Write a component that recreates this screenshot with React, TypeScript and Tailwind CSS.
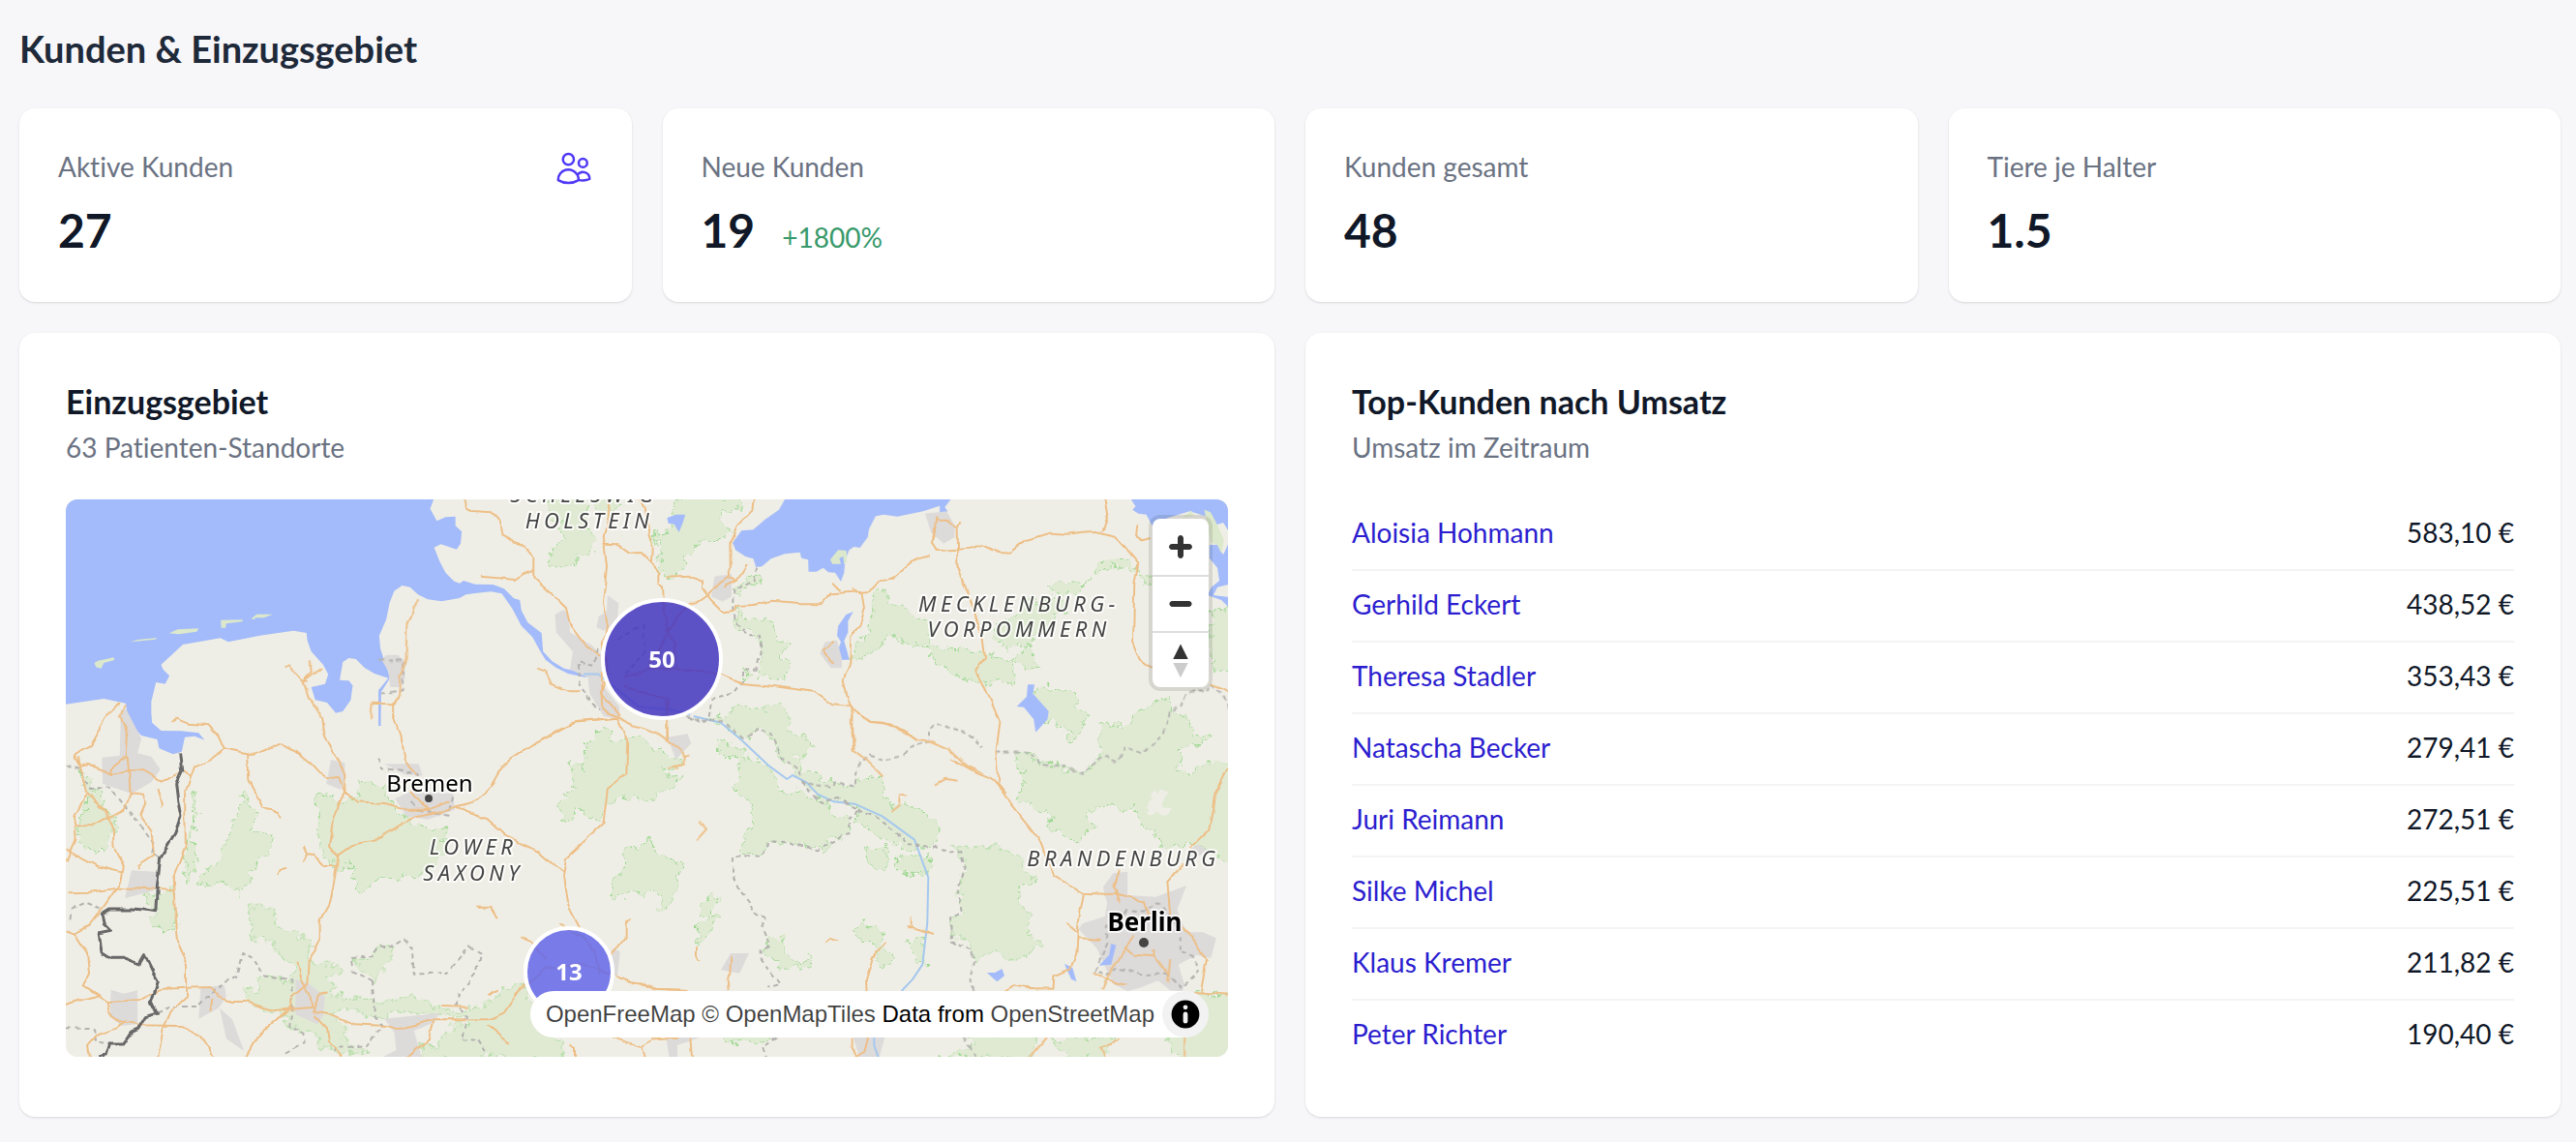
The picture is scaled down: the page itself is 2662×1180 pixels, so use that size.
import { HiOutlineUsers } from "react-icons/hi2";

type Sheet = "nw" | "top" | "ne" | "sw" | "mid" | "se";
type Shape = [Sheet, string];

const STATS = [
  { label: "Aktive Kunden", value: "27", icon: true },
  { label: "Neue Kunden", value: "19", change: "+1800%" },
  { label: "Kunden gesamt", value: "48" },
  { label: "Tiere je Halter", value: "1.5" },
];

const CUSTOMERS = [
  { name: "Aloisia Hohmann", revenue: "583,10 €" },
  { name: "Gerhild Eckert", revenue: "438,52 €" },
  { name: "Theresa Stadler", revenue: "353,43 €" },
  { name: "Natascha Becker", revenue: "279,41 €" },
  { name: "Juri Reimann", revenue: "272,51 €" },
  { name: "Silke Michel", revenue: "225,51 €" },
  { name: "Klaus Kremer", revenue: "211,82 €" },
  { name: "Peter Richter", revenue: "190,40 €" },
];

// The map is made of six overlapping sheets, each with its own grid.
const SHEETS: Record<Sheet, string> = {
  nw: "translate(-28 -136) scale(.4082 .3333)",
  top: "translate(492 -16) scale(.3333)",
  ne: "translate(592 -16) scale(.4082 .3333)",
  sw: "translate(-28 224) scale(.4082 .3333)",
  mid: "translate(432 224) scale(.3333)",
  se: "translate(592 244) scale(.4209 .3333)",
};

const WATER: Shape[] = [
  ["nw", "M60 300H1000V408L991 437 1008 475 1030 463 1055 461 1055 490 1071 508 1068 545 1058 563 1018 547 1001 557 1015 600 1030 635 1052 662 1066 668 1075 660 1105 671 1150 672 1178 685 1203 715 1218 720 1222 752 1238 790 1273 822 1277 880 1300 910 1330 932 1390 948 1385 960 1340 948 1310 930 1283 905 1268 875 1250 835 1222 800 1198 745 1172 700 1145 694 1110 698 1082 703 1065 714 1020 724 985 718 960 703 940 680 920 675 900 692 888 730 880 780 862 830 865 870 878 920 890 960 880 980 867 1005 866 1110 860 1110 860 1000 885 962 850 948 825 930 803 903 785 900 770 912 762 968 785 970 795 985 790 1030 770 1065 752 1070 730 1038 712 1033 700 1030 690 990 725 980 733 950 720 920 690 880 680 845 678 822 645 815 560 830 480 850 460 838 365 858 310 920 315 935 331 955 320 980 297 975 285 1035 285 1085 226 1085 220 1040 165 1026 60 1045Z"],
  ["sw", "M226 -5 235 30 260 60 300 72 305 100 340 118 362 110 370 65 395 62 420 74 405 52 360 46 310 45 287 20 285 -5Z"],
  ["ne", "M369 30V50L355 80 320 110 290 142 260 145 238 182 245 205 270 225 290 232 297 258 312 256 335 232 370 217 408 212 412 230 429 235 430 272 450 272 467 260 480 274 497 275 512 303 520 275 523 235 533 205 545 195 560 198 580 165 583 140 600 100 620 95 655 101 720 85 762 68 762 105 775 143 768 105 782 85 775 72 790 48V30Z"],
  ["ne", "M1242 40 1258 70 1250 80 1265 92 1285 95 1300 130 1340 105 1395 85 1430 98 1450 100 1455 130 1480 120 1500 160V30Z M1445 190 1465 188 1480 220 1500 165V310L1465 320 1455 345 1500 352V390L1475 360 1440 345 1450 320 1470 300 1465 260 1445 230Z"],
  ["ne", "M543 396 525 405 505 440 502 470 512 490 500 530 515 545 533 545 528 520 520 487 530 460 530 425Z M985 622 1002 622 998 650 1020 680 1038 705 1035 730 1005 770 1000 730 975 692 957 690 982 660Z"],
];

const LAKES: Shape[] = [
  ["ne", "M72 105 95 95 118 95 112 120 102 150 90 125 75 122Z"],
  ["se", "M855 735 875 735 892 723 898 745 880 763 868 750Z M1045 707 1065 720 1075 763 1062 755Z M1160 645 1172 650 1160 710 1130 713 1155 680Z"],
];

const ISLANDS: Shape[] = [
  ["nw", "M141 915 150 908 190 898 192 906 165 915 158 932 145 928Z M232 850 250 843 300 837 295 842Z M330 823 352 811 405 808 400 818 355 826Z M461 782 517 781 515 787 475 793 473 806 462 806Z M538 778 552 764 593 764 570 775 550 775 545 780Z"],
  ["ne", "M485 235 505 205 526 207 527 240 520 250 518 225 508 230 512 248 490 248Z M1375 105 1400 83 1405 98Z M1432 80 1448 88 1466 130 1482 175 1475 215 1465 190 1448 180Z"],
];

const WOODS: Shape[] = [
  ["nw", "M1290 400 1380 400 1385 470 1370 505 1400 510 1410 550 1395 580 1365 585 1360 615 1330 610 1300 625 1287 605 1300 555 1330 530 1320 500 1330 480 1290 470Z M1545 520 1568 500V540L1550 540Z"],
  ["top", "M420 40 405 80 420 110 400 140 335 160 360 180 375 215 360 260 390 288 410 275 440 270 440 235 475 210 485 180 550 175 590 150 550 110 560 80 620 85 610 40Z M155 40 235 40 240 75 200 100 160 70Z M600 350 590 335 650 285 690 300 640 320 605 355Z"],
  ["top", "M600 385 625 420 680 415 710 430 730 480 765 495 740 530 770 555 745 605 700 595 670 605 675 575 680 520 685 490 660 465 625 460 600 430Z M630 575 650 590 625 608Z"],
  ["ne", "M550 555 535 550 548 500 575 470 590 410 590 370 600 320 625 325 630 370 670 375 700 420 740 430 740 490 775 510 830 515 900 535 955 550 985 500 930 505 900 475 910 440 935 430 985 345 1000 340 1010 380 1050 355 1075 370 1085 395 1055 400 1045 445 1000 470 990 510 1015 560 980 575 950 550 950 625 905 605 880 625 835 610 800 585 770 560 735 540 730 500 680 495 660 480 630 462 600 520 570 535Z"],
  ["ne", "M1145 275 1170 245 1215 232 1250 245 1262 270 1230 255 1190 258 1165 280Z M1040 310 1060 300 1130 305 1135 285 1110 340 1060 345Z M1265 285 1300 285 1298 315 1275 305Z M995 635 1045 625 1105 645 1110 680 1138 710 1120 770 1095 795 1085 765 1060 745 1035 735 1040 705 1010 670Z M1450 400 1500 380V580L1460 580 1450 500Z"],
  ["ne", "M960 835 985 830 1030 870 1090 885 1120 900 1165 850 1170 750 1200 740 1240 745 1270 695 1340 670 1345 705 1385 720 1400 780 1450 785 1420 805 1370 825 1370 890 1400 890 1440 860 1510 860V1180L1465 1155 1425 1120 1370 1125 1310 1110 1305 1070 1275 1060 1253 995 1228 1020 1196 990 1155 1000 1129 1030 1160 1065 1119 1085 1111 1110 1046 1070 1041 1030 1000 1000 954 985 974 930Z"],
  ["se", "M765 345 800 350 870 345 930 370 945 410 980 455 930 460 930 490 955 560 965 625 990 645 930 695 900 690 885 675 850 680 830 700 815 640 770 625 775 560 795 545 785 480 790 425 800 380Z"],
  ["mid", "M310 70 340 72 370 40 388 45 390 70 430 85 475 70 510 85 520 108 550 105 580 130 620 135 600 165 560 165 565 190 615 182 600 205 570 225 545 240 500 268 455 245 420 268 385 270 355 320 325 305 290 285 280 320 240 325 250 300 230 285 250 240 280 230 275 180 265 145 310 160 320 110Z"],
  ["mid", "M520 370 530 415 550 440 590 445 615 468 595 500 600 530 580 550 595 582 542 600 555 560 520 530 490 553 455 543 405 570 390 540 400 510 430 480 445 455 428 430 445 395 480 408 500 400Z"],
  ["mid", "M728 80 800 105 810 130 870 145 905 190 930 235 965 230 1020 260 1070 272 1075 300 1130 312 1130 362 1040 412 940 390 890 388 865 430 800 430 805 380 835 315 810 250 768 215 790 180 790 130 735 115Z"],
  ["mid", "M700 10 750 -5 800 -25 850 -10 910 -35 950 0 960 60 1000 60 1020 95 990 120 960 120 990 170 1080 205 1150 215 1180 190 1235 190 1260 290 1310 265 1400 320 1420 365 1380 405 1340 410 1250 390 1200 350 1150 330 1160 285 1100 260 1050 270 1010 225 970 180 920 130 890 55 850 38 805 70 740 18Z"],
  ["mid", "M1185 410 1240 403 1250 488 1215 480 1185 440Z M1270 440 1380 430 1385 490 1300 490Z M680 570 710 550 733 560 730 590 700 610 672 610Z M700 620 725 618 720 645 675 718 662 690 665 650Z M865 725 900 680 925 695 930 730 960 760 1000 760 1000 735 1025 780 920 780 900 745Z M1150 660 1175 640 1225 655 1235 700 1265 755 1240 775 1215 750 1205 700 1155 690Z M1310 700 1360 688 1368 778 1345 765Z M740 985H880V1010H740Z"],
  ["sw", "M710 250 735 240 745 262 780 270 810 245 815 205 880 215 880 245 905 300 950 330 1000 350 1028 350 1025 410 1020 440 1000 480 930 500 860 505 825 543 790 505 795 460 755 470 705 410 710 310 700 265Z M105 170 140 200 160 270 205 350 180 370 160 420 140 425 95 375 100 340 120 300 125 240Z"],
  ["sw", "M520 228 530 260 552 300 540 350 600 375 580 430 550 460 530 500 515 555 480 520 450 515 405 530 405 500 450 460 470 400 490 350 490 310 510 290Z M390 235 410 235 395 265 405 310 390 330 395 420 400 450 375 520 368 500 380 400 388 320Z M265 550 300 560 340 525 352 600 340 665 310 660 275 630 300 600 265 585Z"],
  ["sw", "M525 600 555 580 590 600 610 650 685 700 685 760 750 765 765 800 735 805 750 840 735 870 800 865 850 890 940 865 1000 900 1080 910 1150 880 1170 845 1230 825 1240 870 1330 1030 1325 1060H970L965 1020 1010 1025 1030 970 1080 955 1080 935 940 910 850 935 770 910 740 920 775 960 775 1010 830 1050 780 1050 720 1030 700 985 630 970 635 930 560 910 510 850 560 855 550 810 640 825 650 780 610 740 580 690 535 685 540 630Z M795 755 830 755 860 710 898 712 890 760 845 822Z"],
  ["se", "M735 1000 825 965 800 930H985L960 1000Z M1015 945 1170 930 1135 1000H1050Z M1297 950 1340 800H1460V1010H1340L1300 970Z"],
];

const CLEARINGS: Shape[] = [
  ["se", "M1250 240 1260 190 1275 165 1300 190 1280 215 1310 230 1300 250Z"],
];

const TOWNS: Shape[] = [
  ["nw", "M868 905 880 890 910 890 925 910 928 960 915 990 890 990 885 940Z M1307 765 1330 750 1342 770 1345 820 1400 860 1425 890 1425 980 1470 1050V1090L1430 1080 1395 1010 1390 960 1345 935 1352 880 1310 820Z M1440 705 1468 730 1465 790 1430 815 1412 805 1418 770 1438 755Z"],
  ["sw", "M208 -20H222L260 70 250 115 285 125 308 165 285 205 235 240 162 210 160 128 205 122Z M235 478 302 483 292 540 218 565Z M183 848 215 860 250 850V955L210 960 180 930Z M410 840 470 835 475 870 455 905 405 938Z M458 905 490 940 520 1038 475 1000Z M650 815 685 830 725 870 720 930 705 955 650 925Z"],
  ["sw", "M740 135 775 145V200L765 228 728 210Z M875 148H962L972 185 925 180Z M902 255 940 235 1050 240 1053 290 985 320 930 310Z M875 938 1015 920 1000 950 950 975 970 1060H865L905 1035 900 980Z M1455 720 1472 730 1465 805 1440 800Z"],
  ["mid", "M570 65 632 55 643 85 595 135Z M765 735H822L793 797 735 787Z M565 996H670L600 1020V1060H575Z M1145 996H1243L1225 1060H1165Z"],
  ["top", "M535 287 588 280V350L560 365 525 350Z M878 490 915 485 930 540V570H895L862 525Z"],
  ["ne", "M725 92 780 85 800 130V165L772 185 740 150Z"],
  ["se", "M1165 427 1200 422V495L1270 500 1345 465 1322 540 1345 610 1385 610 1418 628 1405 690 1370 680 1325 710 1340 770 1335 793 1305 790 1275 760 1235 780 1200 793 1165 770 1150 730 1125 660 1080 600 1090 583 1145 560 1150 520 1140 470Z M1355 350 1375 338 1395 355 1350 400Z"],
];

const ROADS: Shape[] = [
  ["nw", "M1080 400 1082 430 1095 444 1145 448 1162 470 1170 515 1225 550 1255 590 1255 650 1290 690 1335 745 1345 795 1385 860 1420 890 M1122 647 1205 657 1230 635 1252 635 M1440 400 1445 450 1430 520 1438 620 1428 730 1438 800 1430 860 1440 950 1425 1010 1470 1080 M1430 548 1470 550 1495 572 1525 570 1555 607 1570 640 M1515 400 1538 435 1545 520 1555 560 1553 605"],
  ["nw", "M958 715 948 760 932 795 930 900 915 960 912 1010 897 1050V1085 M618 928 632 922 665 970 680 975 M688 907 690 945 668 975 680 1025 705 1055 712 1085 M718 930 670 975 M840 1085 845 1043 895 1045 912 1015 M1260 926 1280 935 1298 980 1345 1003 1372 1003 M170 1085 203 1038 M205 1085 218 1045"],
  ["sw", "M173 0 130 90 108 105 90 128 105 155 130 150 180 180 265 165 310 200 365 170 385 185 M210 0 225 60 222 125 180 165V180 M225 125 232 240 262 245 270 270 258 305 285 350 292 430 252 462V475 M100 130 120 235 170 295 188 350 190 400 215 465 210 510 165 590 130 645 90 670 70 668 M120 240 88 315 92 340 140 340 215 290 232 240 M90 340 92 375 70 450 M70 412 150 465 215 485 M70 547 130 545 190 535 235 540 265 530 340 538"],
  ["sw", "M90 670 125 740 130 795 112 835 150 865 175 885 M65 895 150 865 175 885 250 880 310 845 430 840 480 885 520 885 590 910 690 900 M340 25 350 5 380 20 430 25 455 60 470 100 545 120 610 85 650 105 690 145 720 185 760 190 775 235 805 265 880 270 930 290 985 290 M470 100 440 130 395 155 370 240 372 400 340 500 345 600 355 720 375 770 375 870 335 915 315 970 302 1060"],
  ["sw", "M300 225 312 283 M527 115 530 200 565 280 605 300 615 312 M715 0 722 60 755 135 775 180 775 235 745 320 735 405 758 430 750 500 735 590 712 640 712 690 685 750 682 830 645 870 640 900 560 985 525 1060 M897 0 915 60 925 140 955 180 M755 430 790 400 850 385 905 345 950 310 1020 295 1055 280 1090 270 1130 245 1165 170 1200 130 1250 90 1355 20 1465 8 M1055 280 1130 315 1180 370 1265 420 1328 487 M1465 8 1490 75 1488 180 1440 225 1430 330 1335 437 1328 500 1337 575 1370 655"],
  ["sw", "M605 490 610 478 630 470 M673 405 682 430 670 455 M682 430 700 432 725 465 755 465 M655 760 665 815 685 860 695 915 730 920 800 955 880 960 910 970 960 955 1000 940 1140 940 1180 920 1230 830 M130 1060 125 1020 150 985 200 965 220 945 M215 950 250 958 360 960 410 990 445 1060 M695 925 730 970 735 1010 770 1060 M690 915 710 870 732 855 M1000 945 990 1000 935 1060 M437 875 432 918 M1110 590 1145 590 1163 628 M1138 962 1190 1015 M175 885 180 920 215 950 M940 235 985 290 1040 265 M1138 868 1158 850 M1020 900 1085 902"],
  ["mid", "M667 325 690 350 658 386 M410 0 470 30 540 50 600 95 628 125 620 150 572 160 M640 118 620 125 M600 155V168 M572 -50 568 65 M1143 0 1145 105 1190 140 1240 190 M1180 0 1210 18 1260 25 1340 72 1390 78 1440 100 1500 155 1545 175 M1262 298 1290 275 1293 247 1312 246 M1397 215 1430 197 1475 203"],
  ["mid", "M408 805 440 820 490 828 520 845 635 850 M395 745 440 685 440 640 457 633 M112 685 150 700 195 757 M660 715V745L667 760 M763 740 760 800 755 820 758 852 M1060 697 1075 683 1100 692 M1247 702 1205 750 1185 820 1187 852 M1310 655 1330 655 1398 678 M1328 628V655 M1145 995V1030L1158 1056 1180 1040 1192 995 M403 995 440 1010 490 1025 500 1060 M490 1025 530 1003 600 998 M640 995 645 1060 M268 1020 282 1030V1060 M240 650 310 680 340 730 355 800 M140 830 190 780 300 770 400 800"],
  ["top", "M345 250 358 275 358 310 375 322 380 400 390 460 412 490 420 580 M390 460 360 520 330 560 M390 460 420 410 455 372 M660 40 655 80 605 130 580 185 582 290 555 305 515 345 480 370 455 372 M385 290 460 287 498 300 498 325 525 360 565 400 600 395 605 378 660 375 720 362 800 370 870 370 895 340 965 335 1015 330 1050 305 1090 290 1165 230 1200 220 M637 250 605 300 565 320 M580 290 605 300 M900 305 925 330"],
  ["top", "M965 325 995 340 1002 385 985 440 958 470 955 560 935 610 950 670 965 710 962 770 968 825 M250 600 330 575 470 575 555 590 620 618 700 625 845 645 900 685 955 690 1020 738 1060 740 1125 765 1160 797 M905 485 875 512 905 557 M390 790 385 670 250 625 M185 580 190 700 230 725 M0 795 60 758 110 738 230 728"],
  ["ne", "M750 208 840 200 870 190 910 213 940 215 980 178 1040 155 1090 158 1120 152 1155 150 1210 165 1265 245 1255 310 1252 485 1270 540 1300 570 M1183 40 1190 90 1175 150 M755 98 752 150 742 185 755 208 M755 110 780 110 805 135 807 260 830 320 845 380 870 470 877 540 853 580 880 640 915 740 905 830 910 930 930 960 M805 135 815 115 M1260 125 1257 160 1275 175 1295 168 M1450 620 1475 630 1495 645"],
  ["se", "M765 70 830 115 860 130 880 150 915 215 990 335 1020 440 1090 488 1165 492 1240 515 1250 560 M1335 590 1395 690 1380 795 M1447 100 1415 180 1400 295 1355 350 M1335 400 1298 450 1305 560 M1178 415 1165 470 1180 520 M1093 488 1080 575 1075 670 1060 725 1020 745 1018 785 950 782 920 775 898 792"],
  ["se", "M1047 580 1075 612 M1078 628 1135 632 M1215 625 1195 655 1165 720 1140 790 M1195 655 1215 680 1265 685 1300 740 M1115 735 1145 755 1200 770 M1305 690 1300 765 M1265 665V685 M1360 795 1450 803 M1338 936V1000 M1000 936 957 1000 M1178 940 1165 955 1135 965 1145 1000 M0 765 40 785 120 788"],
];

const BORDERS: Shape[] = [
  ["top", "M663 262 660 300 595 330 595 430 640 465 675 468 680 520 670 575 625 578 622 610 595 645 530 665 520 735 490 742 440 720 M180 510 150 560 110 550 115 620 155 680 180 700 M235 480 310 440 320 520 260 590"],
  ["mid", "M625 0 680 20 740 15 805 70 850 38 890 55 920 130 980 170 985 205 1080 222 1085 205 1150 215 1160 150 1200 122 1240 135 1300 120 1320 95 1380 75 1380 40 1400 20 1440 35 1500 50 1545 100"],
  ["mid", "M985 205 1050 270 1100 255 1160 290 1230 320 1270 350 1310 400 1400 405 1440 425 1480 420 1490 470 1470 530 1485 610 1450 625 1445 695 1470 715"],
  ["mid", "M1160 290 1132 312 1132 362 1035 415 940 390 890 388 860 432 775 440 770 490 795 545 850 620 875 625 860 655 885 715 860 725 860 755 920 830 880 842 M910 1000 865 1030 875 1060"],
  ["ne", "M905 830 975 830 1025 870 1090 882 1120 900 1180 840 1215 860 1230 815 1275 835 1330 770 1345 705 1375 690 1385 650 1440 640 1450 620 1480 650 1492 695"],
  ["se", "M765 640 820 665 825 700 815 740 820 795 M800 936 830 1000 M1200 540 1190 560 1150 590 1150 640 1135 680 1120 730 1150 745 1175 720 1240 740 1300 740 1335 780 1375 730 1370 690 1330 670 1330 600 1275 520 1240 545Z"],
  ["nw", "M865 905H925L920 1000 870 1010"],
  ["sw", "M70 152 100 160 130 225 175 220 250 325 290 390 285 420 305 440 M82 625 85 595 120 578 160 597 M70 967 140 970 145 1010 180 1015 M300 920 335 900 400 900 440 850 500 810 515 735 545 755 570 805 640 820 645 870 635 960 670 985 670 1015 625 1050 M858 130 870 160 960 180 M945 270 960 290 1035 305 1052 240"],
  ["sw", "M845 820 850 930 870 965 830 1020 750 1030 745 1055 M845 820 795 790 790 750 840 745 860 710 895 712 925 692 945 720 950 800 1035 795 1090 715 1118 735 1105 800 1060 865 1055 895 1085 930 1070 1000 1115 1005 1138 1050"],
];

const COUNTRY: Shape[] = [
  ["sw", "M357 115 362 170 347 210 352 260 360 312 345 365 308 440 300 520 296 605 270 600 235 597 180 597 160 612 165 645 183 667 150 675 157 730 180 748 215 748 255 768 268 740 290 795 302 820 285 885 300 922 270 932 252 970 235 980 215 1017 180 1017 172 1050 150 1055"],
];

const RIVERS: Shape[] = [
  ["top", "M130 590H175L300 690 400 700 460 715"],
  ["mid", "M650 0 735 20 800 75 885 155 940 195 957 183 1000 205 1035 242 1085 265 1150 272 1235 310 1335 383 1378 500 1375 640 1360 770 1330 815 1295 852 M1210 996V1020L1224 1060"],
];

const REGION_LABELS = [
  { text: "SCHLESWIG-", x: 541, y: 3 },
  { text: "HOLSTEIN", x: 541, y: 30 },
  { text: "MECKLENBURG-", x: 985, y: 116 },
  { text: "VORPOMMERN", x: 985, y: 142 },
  { text: "LOWER", x: 421, y: 367 },
  { text: "SAXONY", x: 421, y: 394 },
  { text: "BRANDENBURG", x: 1093, y: 379 },
];

function Layer({ shapes, className, dash, filter }: { shapes: Shape[]; className: string; dash?: string; filter?: string }) {
  return (
    <g className={className} strokeDasharray={dash} strokeLinejoin="round" filter={filter}>
      {shapes.map(([sheet, d]) => (
        <path key={d} d={d} transform={SHEETS[sheet]} vectorEffect="non-scaling-stroke" />
      ))}
    </g>
  );
}

function MapDrawing() {
  return (
    <svg
      className="block h-full w-full bg-[#efeee6]"
      viewBox="0 0 1201 576"
      preserveAspectRatio="xMidYMid slice"
      role="img"
      aria-label="Karte der Patienten-Standorte"
    >
      <defs>
        <filter id="rough" x="0" y="0" width="1201" height="576" filterUnits="userSpaceOnUse">
          <feTurbulence type="fractalNoise" baseFrequency="0.09" numOctaves="3" seed="4" />
          <feDisplacementMap in="SourceGraphic" scale="16" xChannelSelector="R" yChannelSelector="G" />
        </filter>
        <filter id="soft" x="0" y="0" width="1201" height="576" filterUnits="userSpaceOnUse">
          <feTurbulence type="fractalNoise" baseFrequency="0.05" numOctaves="2" seed="9" />
          <feDisplacementMap in="SourceGraphic" scale="7" xChannelSelector="R" yChannelSelector="G" />
        </filter>
      </defs>
      <Layer shapes={WOODS} className="fill-[#e0ead3] stroke-[#9ad68d]" dash="5 3" filter="url(#rough)" />
      <Layer shapes={CLEARINGS} className="fill-[#efeee6]" filter="url(#rough)" />
      <Layer shapes={WATER} className="fill-[#a3bbfa]" />
      <Layer shapes={ISLANDS} className="fill-[#dce8cb]" />
      <Layer shapes={TOWNS} className="fill-[#dddada]" />
      <Layer shapes={LAKES} className="fill-[#a3bbfa]" />
      <Layer shapes={RIVERS} className="fill-none stroke-[#a5c8ee] stroke-2" />
      <Layer shapes={BORDERS} className="fill-none stroke-[#b3b2af] stroke-2" dash="5 4" filter="url(#soft)" />
      <Layer shapes={ROADS} className="fill-none stroke-[#edbf87] stroke-2" filter="url(#soft)" />
      <Layer shapes={COUNTRY} className="fill-none stroke-[#686868] stroke-3" filter="url(#soft)" />

      <g textAnchor="middle" strokeLinejoin="round" paintOrder="stroke" className="stroke-white/80 stroke-4 font-['Noto_Sans',sans-serif]">
        {REGION_LABELS.map((l) => (
          <text key={l.text} x={l.x} y={l.y} className="fill-[#444] text-[22px] tracking-[0.2em] italic">
            {l.text}
          </text>
        ))}
        <text x="376" y="302" className="fill-black text-2xl">Bremen</text>
        <text x="1115" y="446" className="fill-black text-[26px] font-bold">Berlin</text>
      </g>
      <circle cx="375" cy="309" r="4" className="fill-[#444]" />
      <circle cx="1114" cy="458" r="5" className="fill-[#444]" />

      <g textAnchor="middle" className="font-['Noto_Sans',sans-serif] text-2xl font-bold">
        <circle cx="616" cy="165" r="60" className="fill-[#4335c0]/85" />
        <circle cx="616" cy="165" r="61" className="fill-none stroke-white stroke-4" />
        <text x="616" y="174" className="fill-white">50</text>
        <circle cx="520" cy="488" r="44" className="fill-[#6366e8]/85" />
        <circle cx="520" cy="488" r="45" className="fill-none stroke-white stroke-4" />
        <text x="520" y="497" className="fill-white">13</text>
      </g>
    </svg>
  );
}

function MapControls() {
  return (
    <div className="absolute top-5 right-5 flex w-[58px] flex-col overflow-hidden rounded-lg bg-white ring-4 ring-black/10">
      <button type="button" aria-label="Vergrößern" className="h-[58px]">
        <svg viewBox="0 0 29 29" className="size-[58px] fill-[#333]">
          <path d="M14.5 8.5c-.75 0-1.5.75-1.5 1.5v3h-3c-.75 0-1.5.75-1.5 1.5S9.25 16 10 16h3v3c0 .75.75 1.5 1.5 1.5S16 19.75 16 19v-3h3c.75 0 1.5-.75 1.5-1.5S19.75 13 19 13h-3v-3c0-.75-.75-1.5-1.5-1.5z" />
        </svg>
      </button>
      <button type="button" aria-label="Verkleinern" className="h-[58px] border-t-2 border-[#ddd]">
        <svg viewBox="0 0 29 29" className="h-full w-[58px] fill-[#333]">
          <path d="M10 13c-.75 0-1.5.75-1.5 1.5S9.25 16 10 16h9c.75 0 1.5-.75 1.5-1.5S19.75 13 19 13h-9z" />
        </svg>
      </button>
      <button type="button" aria-label="Nach Norden ausrichten" className="h-[58px] border-t-2 border-[#ddd]">
        <svg viewBox="0 0 29 29" className="h-full w-[58px] fill-[#333]">
          <path d="m10.5 14 4-8 4 8h-8z" />
          <path d="m10.5 16 4 8 4-8h-8z" className="fill-[#ccc]" />
        </svg>
      </button>
    </div>
  );
}

function MapAttribution() {
  return (
    <div className="absolute right-5 bottom-5 flex h-12 items-center gap-2 rounded-full bg-white pl-4 font-['Liberation_Sans',sans-serif] text-2xl text-black">
      <p className="whitespace-nowrap">
        <a href="#" className="text-black/75">OpenFreeMap</a>{" "}
        <a href="#" className="text-black/75">© OpenMapTiles</a>{" "}
        Data from{" "}
        <a href="#" className="text-black/75">OpenStreetMap</a>
      </p>
      <button type="button" aria-label="Quellenangaben" className="size-12 rounded-full bg-black/5">
        <svg viewBox="0 0 24 24" className="size-12" fillRule="evenodd">
          <path d="M6 12a6 6 0 1 0 12 0 6 6 0 1 0-12 0m5-3a1 1 0 1 0 2 0 1 1 0 1 0-2 0m0 3a1 1 0 1 1 2 0v3a1 1 0 1 1-2 0" transform="translate(-2.4 -2.4) scale(1.2)" />
        </svg>
      </button>
    </div>
  );
}

export default function App() {
  return (
    <main className="min-h-screen bg-[#f7f7f9] pt-6 pr-4 pb-6 pl-5 font-[Lato,sans-serif] text-[28px] leading-10 text-gray-900 [font-variant-ligatures:none]">
      <h1 className="mb-9 text-[38px] leading-[52px] font-bold text-gray-800">Kunden &amp; Einzugsgebiet</h1>

      <section className="grid grid-cols-4 gap-8">
        {STATS.map((s) => (
          <div key={s.label} className="rounded-2xl bg-white p-10 shadow-sm">
            <div className="flex items-center justify-between text-gray-500">
              <span className="pb-1">{s.label}</span>
              {s.icon ? <HiOutlineUsers className="size-10 text-indigo-600" /> : null}
            </div>
            <div className="mt-2 flex items-baseline gap-7">
              <span className="text-5xl leading-[68px] font-bold">{s.value}</span>
              {s.change ? <span className="text-[#38996b]">{s.change}</span> : null}
            </div>
          </div>
        ))}
      </section>

      <section className="mt-8 grid grid-cols-2 gap-8">
        <div className="rounded-2xl bg-white p-12 shadow-sm">
          <h2 className="text-[34px] leading-[46px] font-bold">Einzugsgebiet</h2>
          <p className="mt-1 text-gray-500">63 Patienten-Standorte</p>
          <div className="relative mt-[34px] h-[576px] overflow-hidden rounded-xl">
            <MapDrawing />
            <MapControls />
            <MapAttribution />
          </div>
        </div>

        <div className="rounded-2xl bg-white p-12 shadow-sm">
          <h2 className="text-[34px] leading-[46px] font-bold">Top-Kunden nach Umsatz</h2>
          <p className="mt-1 text-gray-500">Umsatz im Zeitraum</p>
          <table className="mt-[34px] w-full border-separate border-spacing-0">
            <tbody>
              {CUSTOMERS.map((c) => (
                <tr key={c.name} className="group">
                  <th scope="row" className="h-[74px] border-b-2 border-gray-100 p-0 pb-1 text-left font-normal group-last:h-[72px] group-last:border-b-0">
                    <a href="#" className="text-[#2c1ecf]">{c.name}</a>
                  </th>
                  <td className="h-[74px] border-b-2 border-gray-100 p-0 pb-1 text-right group-last:h-[72px] group-last:border-b-0">{c.revenue}</td>
                </tr>
              ))}
            </tbody>
          </table>
        </div>
      </section>
    </main>
  );
}
